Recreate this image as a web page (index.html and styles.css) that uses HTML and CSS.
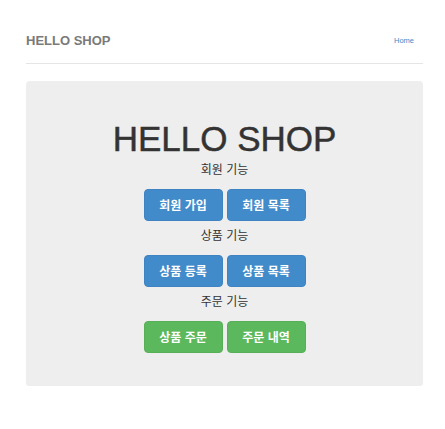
FILE: index.html
```html
<!DOCTYPE html>
<html lang="ko">
<head>
<meta charset="utf-8">
<title>HELLO SHOP</title>
<link rel="stylesheet" href="styles.css">
</head>
<body>
<div class="container">
  <div class="header">
    <h3 class="brand">HELLO SHOP</h3>
    <a class="nav-link" href="#">Home</a>
  </div>
  <div class="jumbotron">
    <h1 class="title">HELLO SHOP</h1>
    <p class="label">회원 기능</p>
    <div class="btns">
      <a class="btn btn-primary" href="#">회원 가입</a>
      <a class="btn btn-primary" href="#">회원 목록</a>
    </div>
    <p class="label">상품 기능</p>
    <div class="btns">
      <a class="btn btn-primary" href="#">상품 등록</a>
      <a class="btn btn-primary" href="#">상품 목록</a>
    </div>
    <p class="label">주문 기능</p>
    <div class="btns">
      <a class="btn btn-success" href="#">상품 주문</a>
      <a class="btn btn-success" href="#">주문 내역</a>
    </div>
  </div>
</div>
</body>
</html>
```

FILE: styles.css
```css
* { box-sizing: border-box; }
html, body { margin: 0; padding: 0; background: #fff; }
body {
  font-family: "Liberation Sans", Arial, "Noto Sans CJK KR", sans-serif;
  color: #333;
}
.container {
  width: 397px;
  margin-left: 26px;
}
.header {
  display: flex;
  justify-content: space-between;
  align-items: flex-start;
  padding-top: 33px;
  padding-bottom: 14px;
  border-bottom: 1px solid #e5e5e5;
}
.brand {
  margin: 0;
  font-size: 13px;
  line-height: 16px;
  font-weight: bold;
  color: #7a7a7a;
}
.nav-link {
  font-size: 7.5px;
  line-height: 16px;
  color: #428bca;
  text-decoration: none;
  margin-right: 9px;
}
.jumbotron {
  margin-top: 17px;
  background: #eee;
  border-radius: 4px;
  box-shadow: 0 1px 1px rgba(0,0,0,0.04);
  padding: 38px 0 33px;
  display: flex;
  flex-direction: column;
  align-items: center;
}
.title {
  margin: 0;
  font-size: 35px;
  line-height: 40px;
  font-weight: normal;
  -webkit-text-stroke: 0.5px #333;
  color: #333;
}
.label {
  margin: 4px 0 10px;
  font-family: "Noto Sans CJK KR", sans-serif;
  font-size: 12px;
  line-height: 20px;
  color: #333;
}
.title + .label { margin-top: 0; }
.btns {
  display: flex;
  gap: 4px;
}
.btn {
  display: block;
  width: 79px;
  height: 32px;
  text-align: center;
  font-family: "Noto Sans CJK KR", sans-serif;
  font-size: 12px;
  font-weight: bold;
  color: #fff;
  text-decoration: none;
  border-radius: 4px;
}
.btn-primary {
  background: #428bca;
  border: 1px solid #3f83c3;
  line-height: 30px;
}
.btn-success {
  background: #5cb85c;
  border: 1px solid #57b057;
  line-height: 30px;
}
```
